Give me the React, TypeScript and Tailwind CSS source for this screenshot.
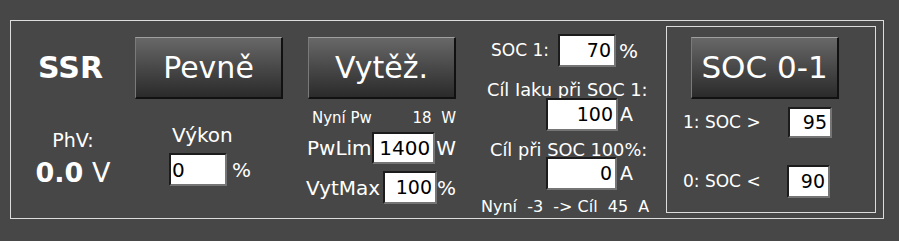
import type { ReactNode } from 'react'

function Btn({ children, size = 'text-[30px]' }: { children: ReactNode; size?: string }) {
  return (
    <div className={`w-[148px] h-[62px] flex items-center justify-center bg-linear-to-b from-[#686868] to-[#2b2b2b] border-t border-l border-t-[#a0a0a0] border-l-[#7a7a7a] border-r-2 border-b-2 border-r-[#111] border-b-[#111] text-white leading-none ${size}`}>
      {children}
    </div>
  )
}

function Field({ value, w, h = 'h-[33px]', left = false, size = 'text-[19px]' }: { value: string; w: string; h?: string; left?: boolean; size?: string }) {
  return (
    <div className={`${w} ${h} flex items-center bg-white text-black border-2 border-t-[#1c1c1c] border-l-[#1c1c1c] border-b-[#757575] border-r-[#757575] leading-none ${size} ${left ? 'justify-start pl-[1px]' : 'justify-end pr-[3px]'}`}>
      {value}
    </div>
  )
}

export default function App() {
  return (
    <div className="w-[899px] h-[241px] bg-[#474747] pt-[20px] pl-[10px] font-['DejaVu_Sans',sans-serif] text-white">
      <div className="w-[874px] h-[199px] border border-[#dcdcdc] flex">
        {/* SSR + PhV */}
        <div className="w-[124px] flex flex-col items-center">
          <div className="mt-[16px] h-[62px] flex items-center pr-[5px] text-[30px] font-bold leading-none">SSR</div>
          <div className="mt-[32px] text-[19px] leading-[19px]">PhV:</div>
          <div className="mt-[9px] text-[27px] leading-[27px] whitespace-pre"><span className="font-bold">0.0</span> V</div>
        </div>

        {/* Pevně + Výkon */}
        <div className="w-[148px] flex flex-col">
          <div className="mt-[16px]"><Btn>Pevně</Btn></div>
          <div className="mt-[26px] ml-[37px] text-[20px] leading-[20px]">Výkon</div>
          <div className="mt-[8px] ml-[34px] flex items-center gap-[5px]">
            <Field value="0" w="w-[58px]" left size="text-[20px]" />
            <span className="text-[20px] leading-none">%</span>
          </div>
        </div>

        {/* Vytěž. */}
        <div className="ml-[25px] w-[148px] flex flex-col">
          <div className="mt-[16px]"><Btn>Vytěž.</Btn></div>
          <div className="mt-[12px] flex text-[15px] leading-[15px]">
            <span className="ml-[4px] w-[102px]">Nyní Pw</span>
            <span className="w-[29px]">18</span>
            <span>W</span>
          </div>
          <div className="mt-[6px] -ml-[1px] flex items-center">
            <span className="w-[67px] text-[20px] leading-none">PwLim</span>
            <Field value="1400" w="w-[72px]" h="h-[32px]" size="text-[20px]" />
            <span className="ml-[1px] text-[20px] leading-none">W</span>
          </div>
          <div className="mt-[7px] -ml-[2px] flex items-center">
            <span className="w-[81px] text-[20px] leading-none">VytMax</span>
            <Field value="100" w="w-[57px]" />
            <span className="text-[20px] leading-none">%</span>
          </div>
        </div>

        {/* SOC limits */}
        <div className="ml-[31px] w-[161px] flex flex-col">
          <div className="mt-[13px] flex items-center">
            <span className="ml-[4px] w-[67px] text-[17px] leading-none">SOC 1:</span>
            <Field value="70" w="w-[58px]" />
            <span className="ml-[3px] text-[20px] leading-none">%</span>
          </div>
          <div className="mt-[14px] text-[17.8px] leading-[17px] whitespace-nowrap">Cíl Iaku při SOC 1:</div>
          <div className="ml-[59px] flex items-center gap-[2px]">
            <Field value="100" w="w-[72px]" />
            <span className="text-[19px] leading-none">A</span>
          </div>
          <div className="mt-[10px] ml-[3px] text-[17.8px] leading-[17px] whitespace-nowrap">Cíl při SOC 100%:</div>
          <div className="ml-[59px] -mt-[1px] flex items-center gap-[3px]">
            <Field value="0" w="w-[71px]" />
            <span className="text-[19px] leading-none">A</span>
          </div>
          <div className="mt-[9px] -ml-[6px] text-[16px] leading-[15px] whitespace-pre">Nyní  -3  -&gt; Cíl  45  A</div>
        </div>

        {/* SOC 0-1 */}
        <div className="ml-[18px] my-[5px] w-[210px] border border-[#dcdcdc] flex flex-col">
          <div className="mt-[10px] ml-[24px]"><Btn size="text-[31px]">SOC 0-1</Btn></div>
          <div className="mt-[8px] flex items-center">
            <span className="ml-[16px] w-[105px] text-[17px] leading-none">1: SOC &gt;</span>
            <Field value="95" w="w-[44px]" h="h-[31px]" />
          </div>
          <div className="mt-[27px] flex items-center">
            <span className="ml-[16px] w-[104px] text-[17px] leading-none">0: SOC &lt;</span>
            <Field value="90" w="w-[43px]" />
          </div>
        </div>
      </div>
    </div>
  )
}
